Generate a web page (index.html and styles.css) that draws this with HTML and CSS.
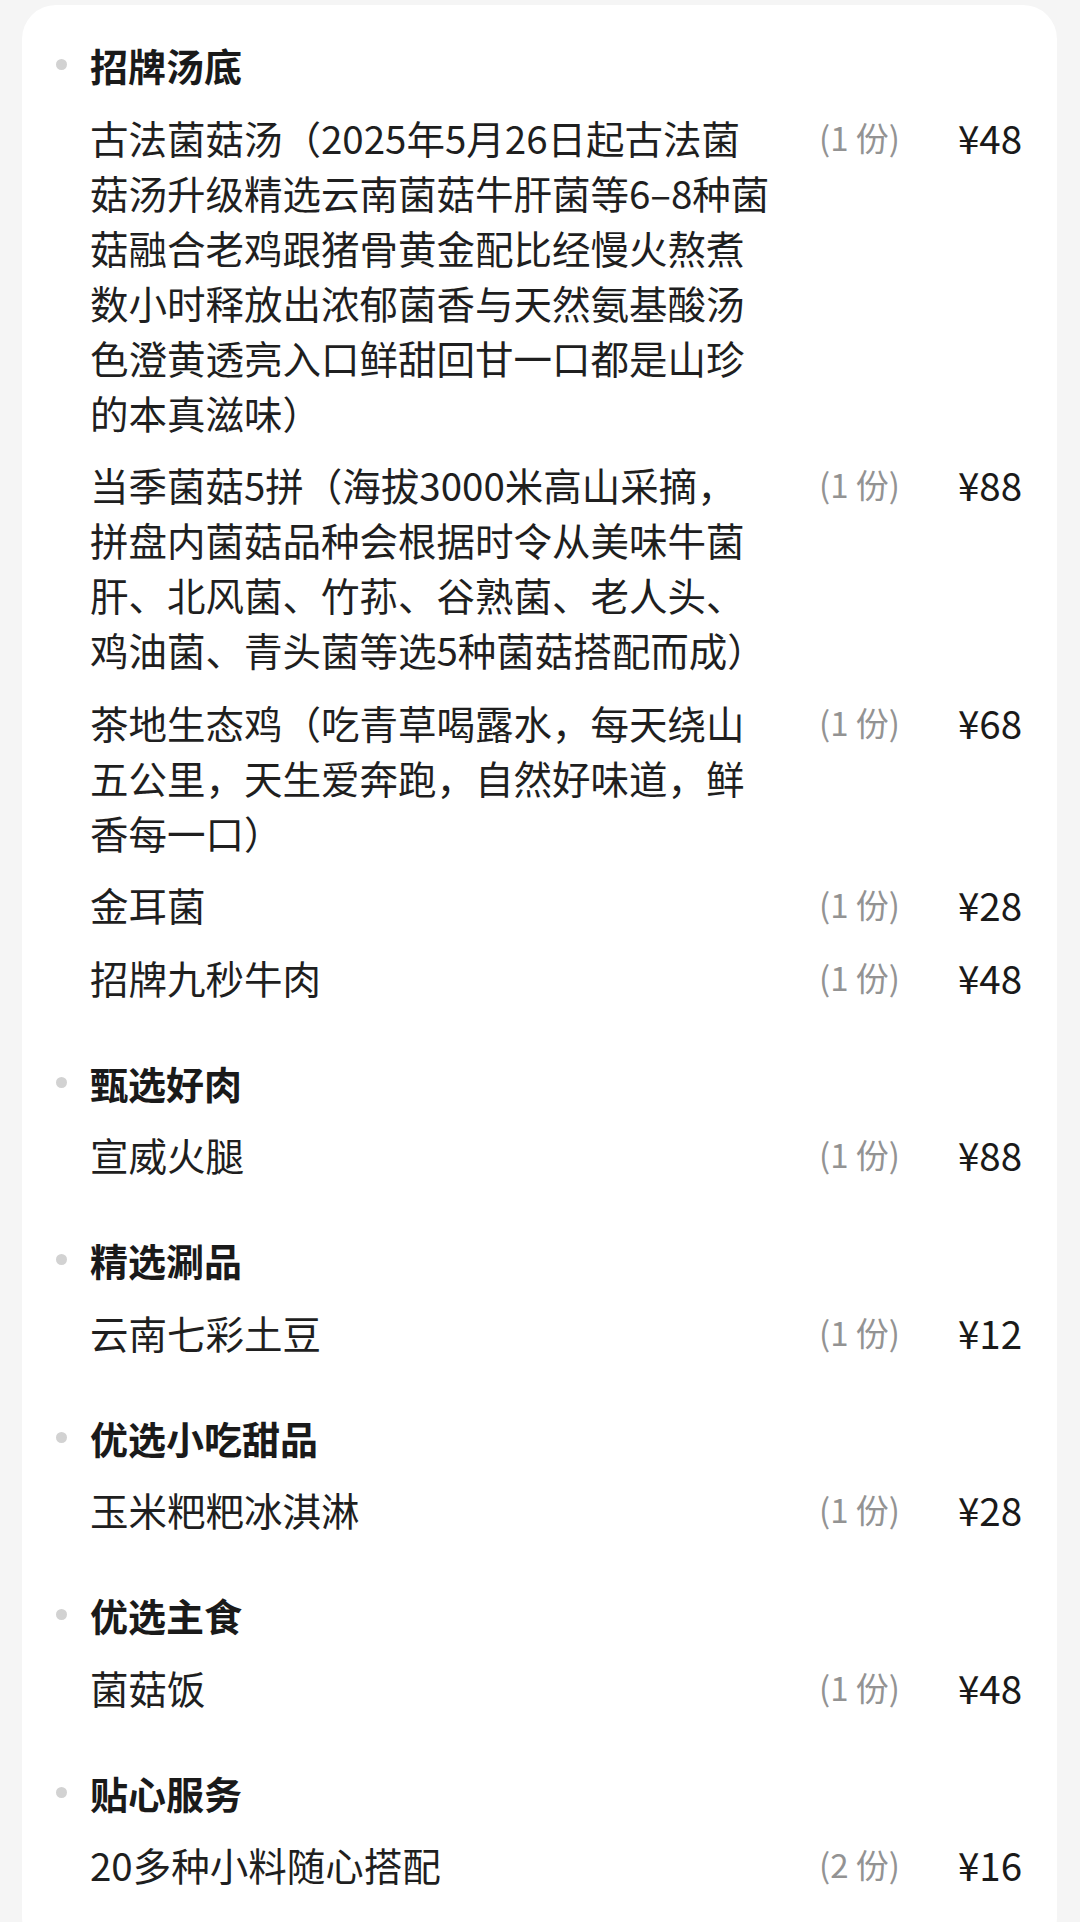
FILE: index.html
```html
<!DOCTYPE html>
<html lang="zh-CN">
<head>
<meta charset="utf-8">
<title>套餐内容</title>
<link rel="stylesheet" href="styles.css">
</head>
<body>
<div class="card">
  <section class="group">
    <h2 class="group-title"><span class="dot"></span>招牌汤底</h2>
    <div class="item"><div class="name">古法菌菇汤（2025年5月26日起古法菌菇汤升级精选云南菌菇牛肝菌等6–8种菌菇融合老鸡跟猪骨黄金配比经慢火熬煮数小时释放出浓郁菌香与天然氨基酸汤色澄黄透亮入口鲜甜回甘一口都是山珍的本真滋味）</div><div class="qty">(1 份)</div><div class="price">¥48</div></div>
    <div class="item"><div class="name">当季菌菇5拼（海拔3000米高山采摘，拼盘内菌菇品种会根据时令从美味牛菌肝、北风菌、竹荪、谷熟菌、老人头、鸡油菌、青头菌等选5种菌菇搭配而成）</div><div class="qty">(1 份)</div><div class="price">¥88</div></div>
    <div class="item"><div class="name">茶地生态鸡（吃青草喝露水，每天绕山五公里，天生爱奔跑，自然好味道，鲜香每一口）</div><div class="qty">(1 份)</div><div class="price">¥68</div></div>
    <div class="item"><div class="name">金耳菌</div><div class="qty">(1 份)</div><div class="price">¥28</div></div>
    <div class="item"><div class="name">招牌九秒牛肉</div><div class="qty">(1 份)</div><div class="price">¥48</div></div>
  </section>
  <section class="group">
    <h2 class="group-title"><span class="dot"></span>甄选好肉</h2>
    <div class="item"><div class="name">宣威火腿</div><div class="qty">(1 份)</div><div class="price">¥88</div></div>
  </section>
  <section class="group">
    <h2 class="group-title"><span class="dot"></span>精选涮品</h2>
    <div class="item"><div class="name">云南七彩土豆</div><div class="qty">(1 份)</div><div class="price">¥12</div></div>
  </section>
  <section class="group">
    <h2 class="group-title"><span class="dot"></span>优选小吃甜品</h2>
    <div class="item"><div class="name">玉米粑粑冰淇淋</div><div class="qty">(1 份)</div><div class="price">¥28</div></div>
  </section>
  <section class="group">
    <h2 class="group-title"><span class="dot"></span>优选主食</h2>
    <div class="item"><div class="name">菌菇饭</div><div class="qty">(1 份)</div><div class="price">¥48</div></div>
  </section>
  <section class="group">
    <h2 class="group-title"><span class="dot"></span>贴心服务</h2>
    <div class="item"><div class="name">20多种小料随心搭配</div><div class="qty">(2 份)</div><div class="price">¥16</div></div>
  </section>
</div>
</body>
</html>
```
FILE: styles.css
```css
html, body {
  margin: 0;
  padding: 0;
  background: #f5f5f5;
}
body {
  font-family: "Noto Sans CJK SC", "Noto Sans", sans-serif;
  color: #1f1f1f;
}
.card {
  margin: 5px 23px 0 22px;
  background: #ffffff;
  border-radius: 34px;
  padding: 32px 35px 60px 68px;
  display: flex;
  flex-direction: column;
  gap: 50px;
}
.group {
  display: flex;
  flex-direction: column;
  gap: 17.5px;
}
.group-title {
  margin: 0 0 0 -34.5px;
  display: flex;
  align-items: center;
  gap: 23.5px;
  font-size: 38px;
  line-height: 55px;
  font-weight: 700;
  color: #1a1a1a;
}
.dot {
  width: 11px;
  height: 11px;
  border-radius: 50%;
  background: #d2d2d2;
  flex: none;
}
.item {
  display: flex;
  align-items: flex-start;
}
.name {
  width: 680px;
  flex: none;
  font-size: 38.5px;
  line-height: 55px;
}
.qty {
  flex: 1;
  text-align: right;
  font-size: 33px;
  line-height: 55px;
  color: #939393;
}
.price {
  width: 122px;
  flex: none;
  text-align: right;
  font-size: 38.5px;
  line-height: 55px;
  color: #1a1a1a;
}
```
